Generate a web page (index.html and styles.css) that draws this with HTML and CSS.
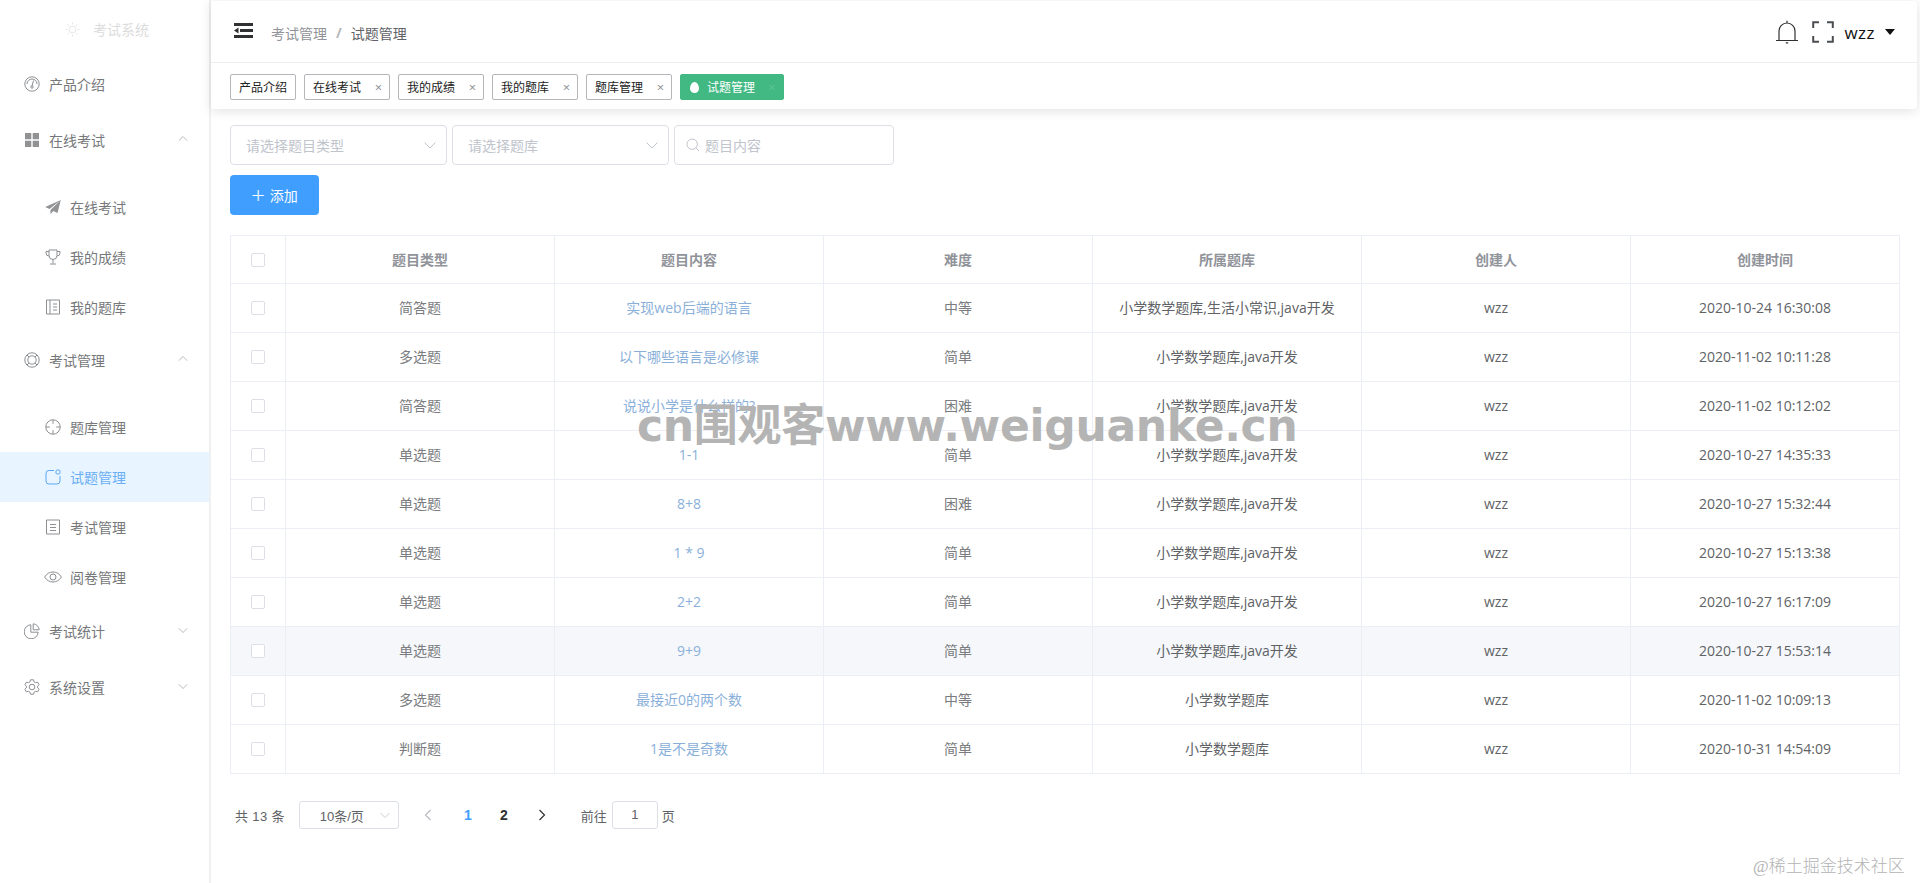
FILE: index.html
```html
<!DOCTYPE html>
<html lang="zh-CN">
<head>
<meta charset="utf-8">
<title>试题管理</title>
<link rel="stylesheet" href="styles.css">
</head>
<body>
<div class="app">
  <aside class="sidebar">
    <div class="logo">
      <svg class="logo-icon" viewBox="0 0 16 16"><circle cx="8" cy="8" r="3.6"/><path d="M8 0.5v2.2M8 13.3v2.2M0.5 8h2.2M13.3 8h2.2M2.7 2.7l1.6 1.6M11.7 11.7l1.6 1.6M2.7 13.3l1.6-1.6M11.7 4.3l1.6-1.6"/></svg>
      <span>考试系统</span>
    </div>
    <nav class="menu">
      <a class="item top">
        <svg class="ic" viewBox="0 0 16 16"><circle cx="8" cy="8" r="7.2"/><path d="M3 8a5 5 0 0 1 10 0M9.5 4.5L8 10"/><circle cx="8" cy="11" r="1.2"/></svg>
        <span>产品介绍</span>
      </a>
      <a class="item top">
        <svg class="ic solid" viewBox="0 0 16 16"><path d="M1 1h6.300v6.300H1zM8.700 1H15v6.300H8.700zM1 8.700h6.300V15H1zM8.700 8.700H15V15H8.700z"/></svg>
        <span>在线考试</span>
        <svg class="chev" viewBox="0 0 12 12"><path d="M1 8l5-5 5 5"/></svg>
      </a>
      <div class="sub">
        <a class="item">
          <svg class="ic solid" viewBox="0 0 16 16"><path d="M15.800 1L.2 8l4.300 2zM15.800 1L5.500 11v4.200l2.800-3.300 4.200 2z"/></svg>
          <span>在线考试</span>
        </a>
        <a class="item">
          <svg class="ic" viewBox="0 0 16 16"><path d="M4 1h8v5.500a4 4 0 0 1-8 0zM4 2.500H1v1.500a3 3 0 0 0 3 3M12 2.500h3v1.500a3 3 0 0 1-3 3M8 10.500v4M5 15h6"/></svg>
          <span>我的成绩</span>
        </a>
        <a class="item">
          <svg class="ic" viewBox="0 0 16 16"><path d="M1.500 1h13v14h-13zM5 1v14M8 5h4M8 8h4M8 11h4"/></svg>
          <span>我的题库</span>
        </a>
      </div>
      <a class="item top">
        <svg class="ic" viewBox="0 0 16 16"><circle cx="8" cy="8" r="7.200"/><circle cx="8" cy="8" r="4.200"/><path d="M3 3l2 2M13 3l-2 2M3 13l2-2M13 13l-2-2"/></svg>
        <span>考试管理</span>
        <svg class="chev" viewBox="0 0 12 12"><path d="M1 8l5-5 5 5"/></svg>
      </a>
      <div class="sub">
        <a class="item">
          <svg class="ic" viewBox="0 0 16 16"><circle cx="8" cy="8" r="7.200"/><path d="M8 .8v4M8 11.200v4M.8 8h4M11.200 8h4"/></svg>
          <span>题库管理</span>
        </a>
        <a class="item active">
          <svg class="ic" viewBox="0 0 16 16"><path d="M9 1.500H4a3 3 0 0 0-3 3V12a3 3 0 0 0 3 3h8a3 3 0 0 0 3-3V7"/><circle cx="13" cy="3" r="2.200"/></svg>
          <span>试题管理</span>
        </a>
        <a class="item">
          <svg class="ic" viewBox="0 0 16 16"><path d="M1.500 1h13v14h-13zM5 5.500h6M5 8.500h6M5 11.500h6"/></svg>
          <span>考试管理</span>
        </a>
        <a class="item">
          <svg class="ic eye" viewBox="0 0 18 16"><path d="M.6 8C2.800 4.500 5.600 3 9 3s6.200 1.500 8.400 5c-2.200 3.500-5 5-8.400 5S2.800 11.500.6 8z"/><circle cx="9" cy="8" r="3"/></svg>
          <span>阅卷管理</span>
        </a>
      </div>
      <a class="item top tight">
        <svg class="ic" viewBox="0 0 16 16"><path d="M6.800 1.800A7 7 0 1 0 14.200 9.200H6.800z"/><path d="M9.200.8a6.500 6.500 0 0 1 6 6h-6z"/></svg>
        <span>考试统计</span>
        <svg class="chev" viewBox="0 0 12 12"><path d="M1 4l5 5 5-5"/></svg>
      </a>
      <a class="item top">
        <svg class="ic" viewBox="0 0 16 16"><path d="M6.500 .8h3l.5 2 1.600.9 2-.6 1.500 2.600-1.500 1.400v1.800l1.500 1.400-1.500 2.600-2-.6-1.600.9-.5 2h-3l-.5-2-1.600-.9-2 .6L.9 10.300l1.500-1.400V7.100L.9 5.700l1.500-2.600 2 .6L6 2.800z"/><circle cx="8" cy="8" r="2.800"/></svg>
        <span>系统设置</span>
        <svg class="chev" viewBox="0 0 12 12"><path d="M1 4l5 5 5-5"/></svg>
      </a>
    </nav>
  </aside>

  <main class="main">
    <header class="head">
      <div class="navbar">
        <svg class="hamburger" viewBox="0 0 19 15"><path d="M0 0h19v3H0zM6 6h13v3H6zM0 12h19v3H0zM0 7.500l4.500-3v6z"/></svg>
        <div class="crumbs">
          <span class="crumb">考试管理</span>
          <span class="sep">/</span>
          <span class="crumb now">试题管理</span>
        </div>
        <div class="tools">
          <svg class="bell" viewBox="0 0 22 24"><path d="M0 20.500h22M3 20.500V11a8 8 0 0 1 16 0v9.500M11 3V.8M9.800 22.800h2.400"/></svg>
          <svg class="full" viewBox="0 0 22 22"><path d="M7 1.200H1.200V7M15 1.200h5.800V7M7 20.800H1.200V15M15 20.800h5.800V15"/></svg>
          <span class="user">wzz</span>
          <span class="caret"></span>
        </div>
      </div>
      <div class="tags">
        <span class="tag">产品介绍</span>
        <span class="tag">在线考试<i class="x">×</i></span>
        <span class="tag">我的成绩<i class="x">×</i></span>
        <span class="tag">我的题库<i class="x">×</i></span>
        <span class="tag">题库管理<i class="x">×</i></span>
        <span class="tag on"><i class="bulb"></i>试题管理<i class="x">×</i></span>
      </div>
    </header>

    <section class="content">
      <div class="filters">
        <div class="field">
          <span class="ph">请选择题目类型</span>
          <svg class="down" viewBox="0 0 12 12"><path d="M.5 3.500L6 9l5.500-5.500"/></svg>
        </div>
        <div class="field">
          <span class="ph">请选择题库</span>
          <svg class="down" viewBox="0 0 12 12"><path d="M.5 3.500L6 9l5.500-5.500"/></svg>
        </div>
        <div class="field search">
          <svg class="glass" viewBox="0 0 14 14"><circle cx="6.200" cy="6.200" r="5.200"/><path d="M10 10l3 3"/></svg>
          <span class="ph">题目内容</span>
        </div>
      </div>
      <button class="add"><span class="plus">+</span>添加</button>

      <table class="grid">
        <colgroup>
          <col class="c0"><col><col><col><col><col><col>
        </colgroup>
        <thead>
          <tr><th><i class="check"></i></th><th>题目类型</th><th>题目内容</th><th>难度</th><th>所属题库</th><th>创建人</th><th>创建时间</th></tr>
        </thead>
        <tbody>
          <tr><td><i class="check"></i></td><td>简答题</td><td class="link">实现web后端的语言</td><td>中等</td><td class="dark">小学数学题库,生活小常识,java开发</td><td class="dark">wzz</td><td class="dark">2020-10-24 16:30:08</td></tr>
          <tr><td><i class="check"></i></td><td>多选题</td><td class="link">以下哪些语言是必修课</td><td>简单</td><td class="dark">小学数学题库,java开发</td><td class="dark">wzz</td><td class="dark">2020-11-02 10:11:28</td></tr>
          <tr><td><i class="check"></i></td><td>简答题</td><td class="link">说说小学是什么样的?</td><td>困难</td><td class="dark">小学数学题库,java开发</td><td class="dark">wzz</td><td class="dark">2020-11-02 10:12:02</td></tr>
          <tr><td><i class="check"></i></td><td>单选题</td><td class="link">1-1</td><td>简单</td><td class="dark">小学数学题库,java开发</td><td class="dark">wzz</td><td class="dark">2020-10-27 14:35:33</td></tr>
          <tr><td><i class="check"></i></td><td>单选题</td><td class="link">8+8</td><td>困难</td><td class="dark">小学数学题库,java开发</td><td class="dark">wzz</td><td class="dark">2020-10-27 15:32:44</td></tr>
          <tr><td><i class="check"></i></td><td>单选题</td><td class="link">1 * 9</td><td>简单</td><td class="dark">小学数学题库,java开发</td><td class="dark">wzz</td><td class="dark">2020-10-27 15:13:38</td></tr>
          <tr><td><i class="check"></i></td><td>单选题</td><td class="link">2+2</td><td>简单</td><td class="dark">小学数学题库,java开发</td><td class="dark">wzz</td><td class="dark">2020-10-27 16:17:09</td></tr>
          <tr class="hover"><td><i class="check"></i></td><td>单选题</td><td class="link">9+9</td><td>简单</td><td class="dark">小学数学题库,java开发</td><td class="dark">wzz</td><td class="dark">2020-10-27 15:53:14</td></tr>
          <tr><td><i class="check"></i></td><td>多选题</td><td class="link">最接近0的两个数</td><td>中等</td><td class="dark">小学数学题库</td><td class="dark">wzz</td><td class="dark">2020-11-02 10:09:13</td></tr>
          <tr><td><i class="check"></i></td><td>判断题</td><td class="link">1是不是奇数</td><td>简单</td><td class="dark">小学数学题库</td><td class="dark">wzz</td><td class="dark">2020-10-31 14:54:09</td></tr>
        </tbody>
      </table>

      <div class="pager">
        <span class="total">共 13 条</span>
        <div class="size">
          <span>10条/页</span>
          <svg class="down small" viewBox="0 0 12 12"><path d="M.5 3.500L6 9l5.500-5.500"/></svg>
        </div>
        <svg class="arrow prev" viewBox="0 0 8 12"><path d="M6.500 1L1.500 6l5 5"/></svg>
        <span class="num cur">1</span>
        <span class="num">2</span>
        <svg class="arrow next" viewBox="0 0 8 12"><path d="M1.500 1l5 5-5 5"/></svg>
        <span class="goto">前往</span>
        <span class="jump">1</span>
        <span class="page">页</span>
      </div>
    </section>
  </main>
</div>
<div class="mark-big">cn围观客www.weiguanke.cn</div>
<div class="mark-small">@稀土掘金技术社区</div>
</body>
</html>
```
FILE: styles.css
```css
* { box-sizing: border-box; }
html, body { margin: 0; height: 100%; }
body {
  font-family: "Open Sans", "Noto Sans CJK SC", sans-serif;
  font-size: 14px;
  color: #606266;
  background: #fff;
  overflow: hidden;
  position: relative;
}
.app { display: flex; height: 883px; }

/* sidebar */
.sidebar { width: 211px; flex: none; border-right: 2px solid #eef0f2; }
.logo {
  height: 56px;
  display: flex;
  align-items: center;
  padding: 2px 0 0 65px;
  color: #dcdcdc;
  gap: 13px;
}
.logo-icon { width: 15px; height: 15px; fill: none; stroke: #e4e4e4; stroke-width: 1; }
.menu { display: flex; flex-direction: column; }
.item {
  display: flex;
  align-items: center;
  height: 50px;
  padding-left: 45px;
  gap: 9px;
  color: #75777a;
  position: relative;
}
.item.top { height: 56px; padding-left: 24px; }
.item.tight { margin-top: 1px; }
.ic {
  width: 16px;
  height: 16px;
  flex: none;
  fill: none;
  stroke: #8d8f92;
  stroke-width: 1;
}
.ic.solid { fill: #909294; stroke: none; }
.ic.eye { width: 18px; margin-left: -1px; margin-right: -1px; }
.sub { padding-top: 14px; }
.item.active { background: #e8f4ff; color: #6aaef5; }
.item.active .ic { stroke: #5aa7f5; }
.chev {
  position: absolute;
  left: 178px;
  top: 22px;
  width: 10px;
  height: 10px;
  fill: none;
  stroke: #a9abae;
  stroke-width: 1;
}

/* header */
.main { flex: 1; min-width: 0; display: flex; flex-direction: column; }
.head {
  margin: 1px 3px 0 0;
  height: 108px;
  background: #fff;
  border-radius: 0 4px 4px 0;
  box-shadow: 0 2px 12px rgba(0, 0, 0, .12);
  position: relative;
}
.navbar {
  height: 62px;
  display: flex;
  align-items: center;
  padding-left: 23px;
  border-bottom: 1px solid #eeeeee;
}
.hamburger { width: 19px; height: 15px; fill: #303133; margin-top: -3px; }
.crumbs { margin-left: 18px; display: flex; gap: 9px; margin-top: 3px; }
.crumb { color: #909399; }
.crumb.now { color: #606266; }
.sep { color: #b5b7ba; font-weight: 700; }
.tools { margin-left: auto; display: flex; align-items: center; margin-top: 1px; padding-right: 22px; }
.bell { width: 22px; height: 24px; fill: none; stroke: #303133; stroke-width: 1.2; }
.full { width: 22px; height: 22px; fill: none; stroke: #4a4d52; stroke-width: 2; margin-left: 14px; }
.user { margin-left: 10px; font-size: 17px; color: #111; letter-spacing: .5px; }
.caret {
  margin-left: 10px;
  width: 0;
  height: 0;
  border-left: 5.5px solid transparent;
  border-right: 5.5px solid transparent;
  border-top: 6.5px solid #111;
}
.tags { display: flex; gap: 8px; padding: 11px 0 0 19px; }
.tag {
  height: 26px;
  display: flex;
  align-items: center;
  padding: 0 8px;
  border: 1px solid #b4b6ba;
  border-radius: 2px;
  font-size: 12px;
  color: #222;
  background: #fff;
  white-space: nowrap;
}
.x { font-style: normal; color: #8c8f94; font-size: 13px; margin: 0 -3px 0 12px; width: 11px; text-align: center; }
.tag.on { background: #42b983; border-color: #42b983; color: #fff; padding-right: 6px; }
.tag.on .x { color: #5cc495; margin: 0 0 0 11px; }
.bulb {
  width: 9px;
  height: 11px;
  margin-right: 8px;
  margin-left: 1px;
  background: #fff;
  border-radius: 50% 50% 50% 50% / 60% 60% 40% 40%;
}

/* content */
.content { padding: 16px 20px 0 19px; }
.filters { display: flex; gap: 5px; height: 40px; }
.field {
  width: 217px;
  height: 40px;
  border: 1px solid #dcdfe6;
  border-radius: 4px;
  display: flex;
  align-items: center;
  justify-content: space-between;
  padding: 0 10px 0 15px;
}
.field.search { width: 220px; justify-content: flex-start; padding-left: 11px; gap: 5px; }
.ph { color: #c0c4cc; }
.down { width: 12px; height: 12px; fill: none; stroke: #c0c4cc; stroke-width: 1; }
.down.small { width: 10px; height: 10px; }
.glass { width: 14px; height: 14px; fill: none; stroke: #c0c4cc; stroke-width: 1; }
.add {
  display: block;
  margin: 10px 0 20px;
  width: 89px;
  height: 40px;
  border: 0;
  border-radius: 4px;
  background: #409eff;
  color: #fff;
  font: inherit;
  padding: 0;
}
.plus { font-size: 24px; font-weight: 300; line-height: 20px; margin-right: 5px; vertical-align: -3px; }

/* table */
.grid { width: 1670px; border-collapse: collapse; table-layout: fixed; }
.c0 { width: 55px; }
.grid th, .grid td {
  border: 1px solid #ebeef5;
  text-align: center;
  padding: 0 0 2px;
  height: 49px;
  font-weight: 400;
}
.grid th { height: 48px; font-weight: 700; color: #909399; font-size: 14px; }
.grid td { color: #7a7c80; }
.grid td.dark { color: #606266; }
.grid td.link { color: #8ab0da; }
.grid .hover td { background: #f5f7fa; }
.check {
  display: block;
  margin: 2px auto 0;
  width: 14px;
  height: 14px;
  border: 1px solid #dcdfe6;
  border-radius: 2px;
  background: #fff;
}

/* pager */
.pager {
  margin-top: 27px;
  height: 28px;
  display: flex;
  align-items: center;
  font-family: "Liberation Sans", "Noto Sans CJK SC", sans-serif;
  font-size: 13px;
  color: #606266;
  padding-left: 5px;
}
.total { letter-spacing: .35px; }
.size {
  margin-left: 14px;
  width: 100px;
  height: 28px;
  border: 1px solid #dcdfe6;
  border-radius: 3px;
  display: flex;
  align-items: center;
  padding: 0 8px 0 20px;
  justify-content: space-between;
}
.arrow { width: 8px; height: 12px; fill: none; stroke-width: 1.2; }
.prev { stroke: #b8bbc1; margin-left: 25px; }
.next { stroke: #303133; }
.num { width: 36px; text-align: center; font-weight: 700; color: #303133; font-size: 14px; }
.num.cur { color: #409eff; margin-left: 18px; }
.num + .next { margin-left: 16px; }
.goto { margin-left: 35px; }
.jump {
  margin-left: 5px;
  width: 46px;
  height: 28px;
  line-height: 26px;
  border: 1px solid #dcdfe6;
  border-radius: 3px;
  text-align: center;
}
.page { margin-left: 4px; }

/* overlays */
.mark-big {
  position: absolute;
  left: 637px;
  top: 396px;
  font-family: "DejaVu Sans", "Noto Sans CJK SC", sans-serif;
  font-weight: 700;
  font-size: 44px;
  letter-spacing: -.3px;
  line-height: 60px;
  color: #b4b4b4;
  white-space: nowrap;
}
.mark-small {
  position: absolute;
  left: 1753px;
  top: 856px;
  font-family: "Liberation Serif", "Noto Sans CJK SC", serif;
  font-size: 17px;
  font-weight: 300;
  line-height: 22px;
  color: #b4b4b4;
  white-space: nowrap;
}
```
